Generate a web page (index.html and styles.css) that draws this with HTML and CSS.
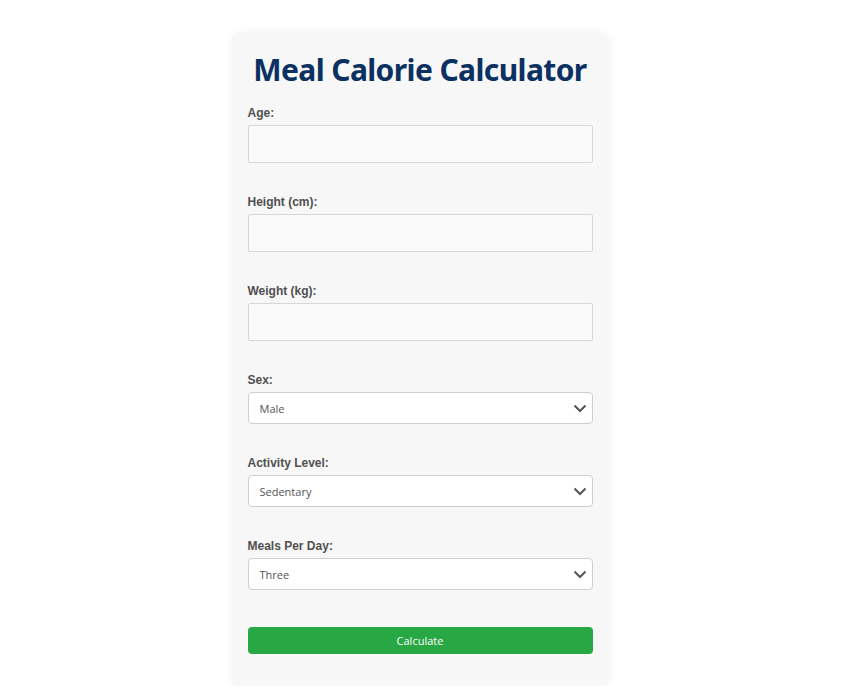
FILE: index.html
```html
<!DOCTYPE html>
<html>
<head>
<meta charset="utf-8">
<link rel="stylesheet" href="styles.css">
</head>
<body>
<div class="card">
  <h1 class="title">Meal Calorie Calculator</h1>
  <div class="group">
    <label class="label">Age:</label>
    <div class="input"></div>
  </div>
  <div class="group">
    <label class="label">Height (cm):</label>
    <div class="input"></div>
  </div>
  <div class="group">
    <label class="label">Weight (kg):</label>
    <div class="input"></div>
  </div>
  <div class="group">
    <label class="label">Sex:</label>
    <div class="select"><span>Male</span><svg class="chev" viewBox="0 0 14 9" width="14" height="9"><path d="M1.5 1.5 L7 7 L12.5 1.5" fill="none" stroke="#555" stroke-width="2"/></svg></div>
  </div>
  <div class="group">
    <label class="label">Activity Level:</label>
    <div class="select"><span>Sedentary</span><svg class="chev" viewBox="0 0 14 9" width="14" height="9"><path d="M1.5 1.5 L7 7 L12.5 1.5" fill="none" stroke="#555" stroke-width="2"/></svg></div>
  </div>
  <div class="group last">
    <label class="label">Meals Per Day:</label>
    <div class="select"><span>Three</span><svg class="chev" viewBox="0 0 14 9" width="14" height="9"><path d="M1.5 1.5 L7 7 L12.5 1.5" fill="none" stroke="#555" stroke-width="2"/></svg></div>
  </div>
  <div class="button">Calculate</div>
</div>
</body>
</html>
```
FILE: styles.css
```css
html, body {
  margin: 0;
  padding: 0;
  background: #ffffff;
}
body {
  display: flex;
  justify-content: center;
  padding-top: 33px;
  font-family: "Liberation Sans", Arial, sans-serif;
}
.card {
  width: 345px;
  margin-left: -10px;
  padding: 16px 16px 32px 16px;
  background: #f7f7f7;
  border-radius: 8px;
  box-shadow: 0 0 10px rgba(0,0,0,0.06);
  display: flex;
  flex-direction: column;
}
.title {
  margin: 0 0 15px 0;
  text-align: center;
  font-family: "Noto Sans", "Open Sans", sans-serif;
  font-weight: 700;
  font-size: 30px;
  line-height: 42px;
  color: #0a3161;
  letter-spacing: -0.6px;
}
.group {
  display: flex;
  flex-direction: column;
  margin-bottom: 32px;
}
.group.last {
  margin-bottom: 37px;
}
.label {
  font-size: 12px;
  font-weight: 700;
  color: #505050;
  line-height: 14px;
  margin-bottom: 5px;
}
.input {
  height: 36px;
  border: 1px solid #d6d6d6;
  background: #fafafa;
  border-radius: 2px;
}
.select {
  height: 30px;
  border: 1px solid #cfcfcf;
  background: #ffffff;
  border-radius: 4px;
  display: flex;
  align-items: center;
  justify-content: space-between;
  padding: 0 5px 0 11px;
  font-family: "Open Sans", "Noto Sans", sans-serif;
  font-size: 11px;
  color: #555;
}
.button {
  height: 27px;
  background: #28a745;
  border-radius: 4px;
  color: #fff;
  font-family: "Open Sans", "Noto Sans", sans-serif;
  font-size: 11px;
  display: flex;
  align-items: center;
  justify-content: center;
}
```
